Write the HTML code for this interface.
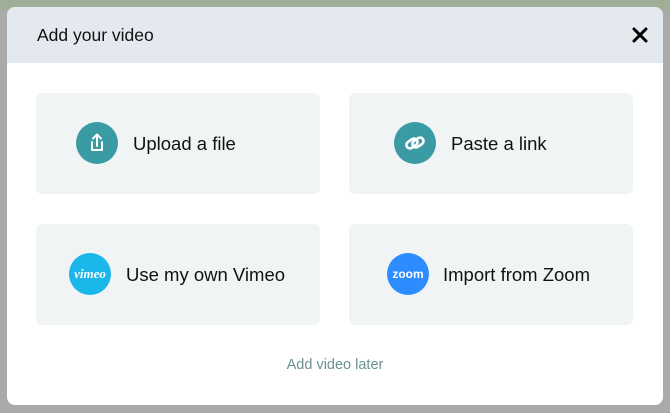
<!DOCTYPE html>
<html><head><style>
body{margin:0;width:670px;height:413px;background:#a9aaa9;position:relative;overflow:hidden;font-family:"Liberation Sans",sans-serif;}
.bg1{position:absolute;left:0;top:0;width:670px;height:10px;background:#9fae96}
.modal{position:absolute;left:7px;top:7px;width:656px;height:398px;background:#fff;border-radius:8px;overflow:hidden}
.hdr{position:absolute;left:0;top:0;width:656px;height:56px;background:#e4e8ef}
.title{position:absolute;left:30px;top:18px;font-size:17.5px;color:#111}
.x{position:absolute;left:624px;top:19px}
.card{position:absolute;width:284px;height:101px;background:#f1f4f5;border-radius:6px}
.ic{position:absolute;width:42px;height:42px;border-radius:50%;top:29px}
.lbl{position:absolute;top:40px;font-size:18.5px;color:#111}
.later{position:absolute;left:0;width:656px;text-align:center;top:350px;font-size:14.5px;color:#6a9091}
</style></head><body>
<div class="bg1"></div>
<div class="modal">
<div class="hdr"></div>
<div class="title">Add your video</div>
<svg class="x" width="18" height="18" viewBox="0 0 18 18"><path d="M3 3L15 15M15 3L3 15" stroke="#000" stroke-width="3" stroke-linecap="round"/></svg>
<div class="card" style="left:29px;top:86px">
 <div class="ic" style="left:40px;background:#3b9ba4"><svg width="42" height="42" viewBox="0 0 42 42"><path d="M21 24V13M17 16.5L21 12.5L25 16.5M16 20v8h10v-8" fill="none" stroke="#fff" stroke-width="2" stroke-linecap="round" stroke-linejoin="round"/></svg></div>
 <div class="lbl" style="left:97px">Upload a file</div>
</div>
<div class="card" style="left:342px;top:86px">
 <div class="ic" style="left:45px;background:#3b9ba4"><svg width="42" height="42" viewBox="0 0 42 42"><g fill="none" stroke="#fff" stroke-width="2.6"><rect x="12" y="18" width="12" height="7" rx="3.5" transform="rotate(-35 18 21.5)"/><rect x="18" y="17" width="12" height="7" rx="3.5" transform="rotate(-35 24 20.5)"/></g></svg></div>
 <div class="lbl" style="left:102px">Paste a link</div>
</div>
<div class="card" style="left:29px;top:217px">
 <div class="ic" style="left:33px;background:#1ab7ea;color:#fff;font-family:'Liberation Serif',serif;font-style:italic;font-weight:bold;font-size:13px;text-align:center;line-height:42px">vimeo</div>
 <div class="lbl" style="left:90px">Use my own Vimeo</div>
</div>
<div class="card" style="left:342px;top:217px">
 <div class="ic" style="left:38px;background:#2d8cff;color:#fff;font-size:12px;font-weight:bold;text-align:center;line-height:42px">zoom</div>
 <div class="lbl" style="left:94px">Import from Zoom</div>
</div>
<div class="later">Add video later</div>
</div>
</body></html>
